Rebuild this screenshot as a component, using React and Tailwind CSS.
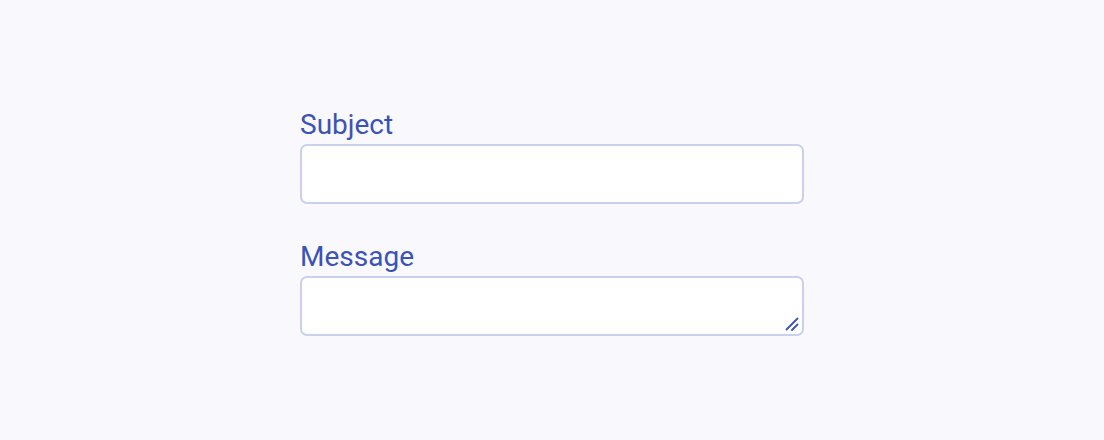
export default function App() {
  return (
    <div className="h-[440px] w-full bg-[#f9f8fc] flex items-center justify-center pt-1" style={{ fontFamily: 'Roboto, "Noto Sans", sans-serif' }}>
      <form className="w-[504px] flex flex-col">
        <label htmlFor="subject" className="block text-[28px] leading-[34px] text-[#3b53b4] mb-[2px]">
          Subject
        </label>
        <input
          id="subject"
          type="text"
          className="block w-full h-[60px] rounded-[7px] border-2 border-[#c9d1ee] bg-white px-3 text-[20px] text-[#3b53b4] outline-none"
        />
        <label htmlFor="message" className="block text-[28px] leading-[34px] text-[#3b53b4] mt-9 mb-[2px]">
          Message
        </label>
        <div className="relative">
          <textarea
            id="message"
            className="block w-full h-[60px] resize-none rounded-[7px] border-2 border-[#c9d1ee] bg-white px-3 py-2 text-[20px] text-[#3b53b4] outline-none"
          />
          <svg
            className="absolute right-[5px] bottom-[5px] pointer-events-none"
            width="14"
            height="14"
            viewBox="0 0 14 14"
            fill="none"
            stroke="#3b53b4"
            strokeWidth="1.8"
            strokeLinecap="round"
          >
            <line x1="12.5" y1="1.5" x2="1.5" y2="12.5" />
            <line x1="12.5" y1="7.5" x2="7" y2="13" />
          </svg>
        </div>
      </form>
    </div>
  );
}
